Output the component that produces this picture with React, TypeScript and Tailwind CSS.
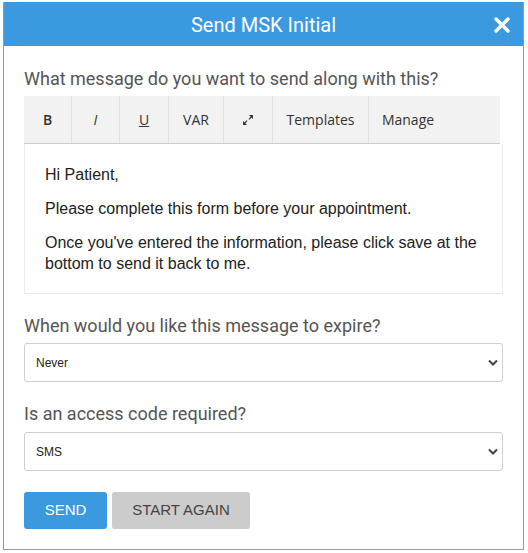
import React from 'react';

const toolbarItems = [
    { label: 'B', w: 'w-[48px]', cls: 'font-semibold' },
    { label: 'I', w: 'w-[48px]', cls: 'italic' },
    { label: 'U', w: 'w-[49px]', cls: 'underline' },
    { label: 'VAR', w: 'w-[55px]', cls: '' },
    { label: 'expand', w: 'w-[49px]', cls: '' },
    { label: 'Templates', w: 'w-[96px]', cls: '' },
    { label: 'Manage', w: 'w-[78px]', cls: '' },
];

const ExpandIcon = () => (
    <svg width="12" height="12" viewBox="0 0 12 12" fill="#333">
        <path d="M7 1h4v4l-1.4-1.4-2.2 2.2-0.9-0.9 2.2-2.2z" />
        <path d="M5 11H1V7l1.4 1.4 2.2-2.2 0.9 0.9-2.2 2.2z" />
    </svg>
);

const Chevron = () => (
    <svg width="10" height="7" viewBox="0 0 10 7" fill="none" stroke="#444" strokeWidth="2">
        <path d="M1 1.5l4 4 4-4" />
    </svg>
);

const SelectBox = ({ value }: { value: string }) => (
    <div className="flex items-center justify-between h-[39px] border border-[#cfcfcf] rounded-[3px] pl-[11px] pr-[4px] bg-white">
        <span className="text-[12px] text-[#222] font-['Liberation_Sans',Arial,sans-serif]">{value}</span>
        <Chevron />
    </div>
);

export default function App() {
    return (
        <div className="w-[528px] h-[553px] bg-white pl-[3px] pt-[2px] font-['Roboto',sans-serif]">
            <div className="w-[521px] h-[548px] border border-[#999] border-t-0 flex flex-col">
                <div className="h-[44px] bg-[#3b99e0] flex items-center justify-center relative">
                    <h1 className="text-white text-[20px] pt-[1px]">Send MSK Initial</h1>
                    <svg className="absolute right-[13px] top-[15px]" width="16" height="16" viewBox="0 0 16 16" stroke="white" strokeWidth="3.4" strokeLinecap="round">
                        <path d="M2 2l12 12M14 2L2 14" />
                    </svg>
                </div>
                <div className="px-[20px] pt-[21px] flex flex-col">
                    <p className="text-[18px] text-[#555] leading-[24px]">What message do you want to send along with this?</p>
                    <div className="mt-[5px] w-[479px]">
                        <div className="flex h-[48px] bg-[#f2f2f2] border-b border-[#ccc] mr-[3px] font-['Open_Sans',sans-serif] text-[14px] text-[#333]">
                            {toolbarItems.map((t, i) => (
                                <div
                                    key={t.label}
                                    className={`${t.w} flex items-center justify-center ${i < toolbarItems.length - 1 ? 'border-r border-[#e2e2e2]' : ''}`}
                                >
                                    {t.label === 'expand' ? <ExpandIcon /> : <span className={t.cls}>{t.label}</span>}
                                </div>
                            ))}
                        </div>
                        <div className="h-[150px] border border-t-0 border-[#ececec] px-[20px] pt-[20px] font-['Liberation_Sans',Arial,sans-serif] text-[16px] leading-[21px] text-[#222] flex flex-col gap-[13px]">
                            <p>Hi Patient,</p>
                            <p>Please complete this form before your appointment.</p>
                            <p>Once you've entered the information, please click save at the bottom to send it back to me.</p>
                        </div>
                    </div>
                    <p className="mt-[20px] text-[18px] text-[#555] leading-[24px]">When would you like this message to expire?</p>
                    <div className="mt-[5px]">
                        <SelectBox value="Never" />
                    </div>
                    <p className="mt-[20px] text-[18px] text-[#555] leading-[24px]">Is an access code required?</p>
                    <div className="mt-[6px]">
                        <SelectBox value="SMS" />
                    </div>
                    <div className="mt-[21px] flex gap-[5px] font-['Liberation_Sans',Arial,sans-serif] text-[15px]">
                        <button className="w-[83px] h-[37px] rounded-[3px] bg-[#3b99e0] text-white">SEND</button>
                        <button className="w-[138px] h-[37px] rounded-[3px] bg-[#cccccc] text-[#444]">START AGAIN</button>
                    </div>
                </div>
            </div>
        </div>
    );
}
